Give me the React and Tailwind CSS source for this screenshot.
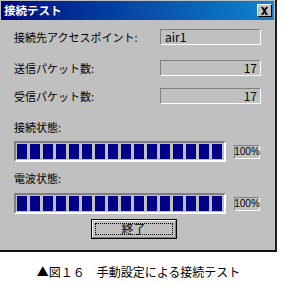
import React from 'react';

const jp = { fontFamily: '"Noto Sans CJK JP", "Noto Sans", sans-serif' };

function Field({ value, right }) {
  return (
    <div className={`w-[101px] h-[16px] border border-t-[#808080] border-l-[#808080] border-b-white border-r-white bg-[#c0c0c0] flex items-center text-[12px] leading-none text-black ${right ? 'justify-end pr-[3px]' : 'pl-[4px]'}`}>
      {value}
    </div>
  );
}

function Bar() {
  const blocks = Array.from({ length: 17 });
  return (
    <div className="flex items-center">
      <div className="w-[212px] h-[21px] border-2 border-t-[#808080] border-l-[#808080] border-b-white border-r-white flex items-center gap-[3px] pl-[1px] pr-[2px] py-[1px] overflow-hidden">
        {blocks.map((_, i) => (
          <div key={i} className="w-[10px] h-full shrink-0 bg-[#000088]" />
        ))}
      </div>
      <div className="ml-[8px] w-[26px] h-[14px] border border-t-[#808080] border-l-[#808080] border-b-white border-r-white flex items-center justify-center text-[10px] leading-none text-black" style={{ fontFamily: '"Liberation Sans", sans-serif' }}>
        100%
      </div>
    </div>
  );
}

export default function App() {
  return (
    <div className="w-[283px] h-[287px] bg-white overflow-hidden" style={jp}>
      <div className="w-[277px] h-[252px] bg-[#c0c0c0] border-r-2 border-b-2 border-r-[#202020] border-b-[#101010] flex flex-col">
        {/* title bar */}
        <div className="h-[19px] mx-[1px] mt-[1px] bg-gradient-to-r from-[#000080] via-[#0a4aa8] to-[#1084d0] flex items-center justify-between pl-[3px] pr-[2px]">
          <span className="text-white font-bold text-[11.5px] leading-none">接続テスト</span>
          <div className="w-[15px] h-[13px] bg-[#c0c0c0] border border-t-white border-l-white border-b-black border-r-black flex items-center justify-center">
            <svg width="9" height="8" viewBox="0 0 9 8">
              <path d="M1 0h2l1.5 2 1.5-2h2L5.5 4 8 8H6L4.5 6 3 8H1l2.5-4z" fill="#000" />
            </svg>
          </div>
        </div>

        <div className="pl-[14px] pr-[14px] flex flex-col text-[11px] text-black">
          <div className="mt-[9px] flex items-center justify-between">
            <span className="leading-none">接続先アクセスポイント:</span>
            <Field value="air1" />
          </div>
          <div className="mt-[15px] flex items-center justify-between">
            <span className="leading-none">送信パケット数:</span>
            <Field value="17" right />
          </div>
          <div className="mt-[12px] flex items-center justify-between">
            <span className="leading-none">受信パケット数:</span>
            <Field value="17" right />
          </div>
          <div className="mt-[15px] h-[16px] flex items-center leading-none">接続状態:</div>
          <div className="mt-[6px]">
            <Bar />
          </div>
          <div className="mt-[8px] h-[16px] flex items-center leading-none">電波状態:</div>
          <div className="mt-[7px]">
            <Bar />
          </div>
          <div className="mt-[5px] flex justify-center pr-[8px]">
            <div className="w-[86px] h-[20px] border border-black">
              <div className="w-full h-full border border-t-white border-l-white border-b-[#808080] border-r-[#808080] p-[2px]">
                <div className="w-full h-full border border-dotted border-black flex items-center justify-center text-[12px] leading-none">
                  終了
                </div>
              </div>
            </div>
          </div>
        </div>
      </div>
      <div className="mt-[12px] h-[16px] flex items-center justify-center text-[12px] leading-none text-black pr-[6px]">
        ▲図１６　手動設定による接続テスト
      </div>
    </div>
  );
}
